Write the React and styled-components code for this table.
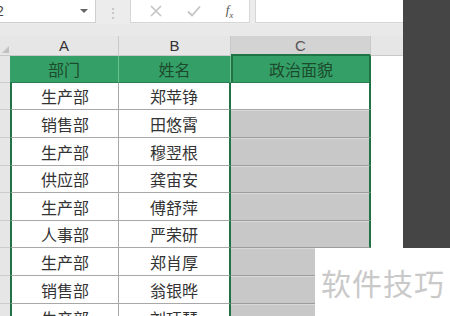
import React from 'react';
import styled, { createGlobalStyle } from 'styled-components';

const GlobalStyle = createGlobalStyle`
  html, body {
    margin: 0;
    padding: 0;
    background: #ffffff;
    font-family: "Noto Sans CJK SC", "Liberation Sans", sans-serif;
    overflow: hidden;
  }
`;

const GREEN = '#217346';

const Page = styled.div`
  position: relative;
  width: 450px;
  height: 316px;
  display: flex;
  align-items: flex-start;
  overflow: hidden;
`;

const Sheet = styled.div`
  width: 403px;
  height: 316px;
  display: flex;
  flex-direction: column;
  background: #ffffff;
  overflow: hidden;
  & > * {
    flex-shrink: 0;
  }
`;

const SidePanel = styled.div`
  width: 47px;
  height: 248px;
  background: #454545;
`;

const FormulaBar = styled.div`
  height: 24px;
  display: flex;
  align-items: stretch;
  background: #ececec;
  box-sizing: border-box;
  padding-bottom: 1px;
`;

const NameBox = styled.div`
  width: 96px;
  background: #fff;
  border-right: 1px solid #cfcfcf;
  border-bottom: 1px solid #cfcfcf;
  display: flex;
  align-items: center;
  justify-content: space-between;
  padding: 0 7px 0 0;
  box-sizing: border-box;
  font-family: "Liberation Sans", sans-serif;
  font-size: 14px;
  color: #444;
  text-indent: -4px;
`;

const Caret = styled.span`
  width: 0;
  height: 0;
  border-left: 4px solid transparent;
  border-right: 4px solid transparent;
  border-top: 4px solid #666;
`;

const Grip = styled.div`
  width: 34px;
  display: flex;
  align-items: center;
  justify-content: center;
  color: #b4b4b4;
  font-size: 12px;
`;

const ButtonBox = styled.div`
  width: 120px;
  background: #fff;
  border: 1px solid #d6d6d6;
  border-top: none;
  display: flex;
  align-items: center;
  justify-content: space-around;
  padding: 0 4px 0 6px;
  box-sizing: border-box;
`;

const FxText = styled.span`
  font-family: "Liberation Serif", serif;
  font-style: italic;
  font-size: 13px;
  color: #555;
  & sub {
    font-size: 9px;
  }
`;

const FormulaInput = styled.div`
  flex: 1;
  margin-left: 5px;
  background: #fff;
  border-left: 1px solid #d6d6d6;
  border-bottom: 1px solid #d6d6d6;
`;

const Spacer = styled.div`
  height: 12px;
  background: #e9e9e9;
`;

const Row = styled.div`
  display: grid;
  grid-template-columns: 10px 109px 112px 140px 32px;
  height: ${p => p.$h}px;
`;

const HeadCell = styled.div`
  display: flex;
  align-items: center;
  justify-content: center;
  font-family: "Liberation Sans", sans-serif;
  font-size: 15px;
  color: ${p => (p.$active ? '#555' : '#333')};
  background: ${p => (p.$active ? '#d3d3d3' : '#e6e6e6')};
  border-right: 1px solid ${p => (p.$edge ? '#e6e6e6' : '#c9c9c9')};
  box-sizing: border-box;
  border-bottom: ${p => (p.$active ? `2px solid ${GREEN}` : '1px solid #c9c9c9')};
`;

const Corner = styled.div`
  background: #e6e6e6;
  border-bottom: 1px solid #c9c9c9;
  position: relative;
  &::after {
    content: '';
    position: absolute;
    right: 1px;
    bottom: 2px;
    border-left: 7px solid transparent;
    border-bottom: 7px solid #c2c2c2;
  }
`;

const RowHead = styled.div`
  background: #e6e6e6;
  border-bottom: 1px solid #cdcdcd;
  box-sizing: border-box;
`;

const Cell = styled.div`
  display: flex;
  align-items: center;
  justify-content: center;
  font-size: 16px;
  color: ${p => (p.$title ? '#1c4a2c' : '#333')};
  background: ${p => (p.$title ? '#34a067' : p.$shade ? '#c8c8c8' : '#fff')};
  box-sizing: border-box;
  border-bottom: 1px solid ${p => (p.$title ? '#2a7d50' : p.$shade ? '#9c9c9c' : '#a8a8a8')};
  border-left: ${p => (p.$left ? `2px solid ${GREEN}` : 'none')};
  border-right: ${p => (p.$right ? `2px solid ${GREEN}` : p.$title ? '1px solid #6cbf91' : '1px solid #a8a8a8')};
  box-shadow: ${p => (p.$shade ? 'inset 0 1px 0 #d9d9d9' : 'none')};
  white-space: nowrap;
`;

const Blank = styled.div`
  background: #fff;
`;

const Watermark = styled.div`
  position: absolute;
  left: 315px;
  top: 248px;
  width: 135px;
  height: 68px;
  background: #fff;
  display: flex;
  align-items: center;
  padding-left: 6px;
  box-sizing: border-box;
  font-size: 30px;
  letter-spacing: 1px;
  color: #c9c9c9;
`;

const rows = [
  ['生产部', '郑苹铮'],
  ['销售部', '田悠霄'],
  ['生产部', '穆翌根'],
  ['供应部', '龚宙安'],
  ['生产部', '傅舒萍'],
  ['人事部', '严荣研'],
  ['生产部', '郑肖厚'],
  ['销售部', '翁银晔'],
  ['生产部', '刘珏琴'],
];

const heights = [27, 28, 28, 27, 28, 27, 28, 28, 28];

export default function App() {
  return (
    <Page>
      <GlobalStyle />
      <Sheet>
        <FormulaBar>
          <NameBox>
            <span>2</span>
            <Caret />
          </NameBox>
          <Grip>⋮</Grip>
          <ButtonBox>
            <svg width="14" height="14" viewBox="0 0 14 14">
              <path d="M2 2L12 12M12 2L2 12" stroke="#c4c4c4" strokeWidth="1.6" />
            </svg>
            <svg width="16" height="14" viewBox="0 0 16 14">
              <path d="M2 7.5L6 11.5L14 2.5" stroke="#c4c4c4" strokeWidth="1.8" fill="none" />
            </svg>
            <FxText>f<sub>x</sub></FxText>
          </ButtonBox>
          <FormulaInput />
        </FormulaBar>
        <Spacer />
        <Row $h={20}>
          <Corner />
          <HeadCell>A</HeadCell>
          <HeadCell>B</HeadCell>
          <HeadCell $active>C</HeadCell>
          <HeadCell $edge />
        </Row>
        <Row $h={27}>
          <RowHead />
          <Cell $title>部门</Cell>
          <Cell $title>姓名</Cell>
          <Cell $title $left $right>政治面貌</Cell>
          <Blank />
        </Row>
        {rows.map((r, i) => (
          <Row key={i} $h={heights[i]}>
            <RowHead />
            <Cell $left>{r[0]}</Cell>
            <Cell $right>{r[1]}</Cell>
            <Cell $shade={i > 0} $right />
            <Blank />
          </Row>
        ))}
      </Sheet>
      <SidePanel />
      <Watermark>软件技巧</Watermark>
    </Page>
  );
}
